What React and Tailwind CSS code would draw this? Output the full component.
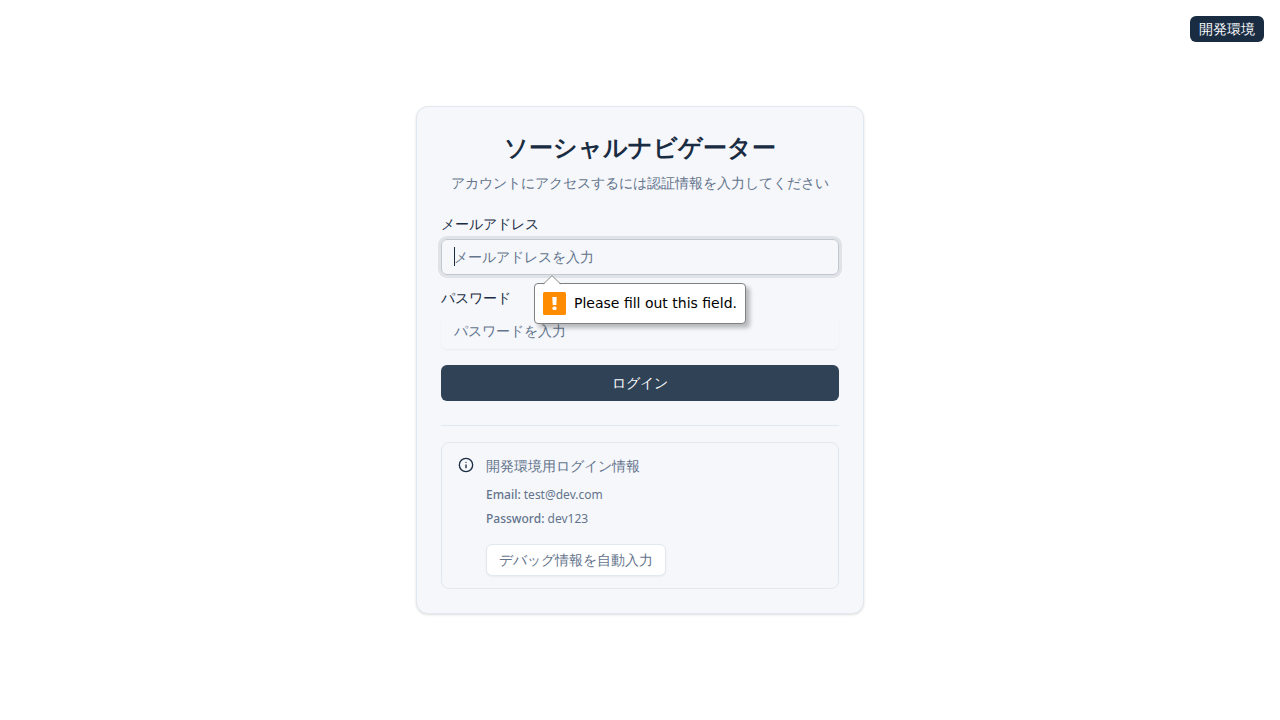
import { useState } from "react";
import { Info } from "lucide-react";

const inputBase =
  "h-9 w-full rounded-md border bg-transparent px-3 pt-1 pb-1.5 text-sm text-[#1a2c42] outline-none placeholder:text-[#64748b]";

function ValidationBubble({ children }) {
  return (
    <div
      role="alert"
      className="absolute top-full left-[93px] z-10 mt-2 flex h-[41px] items-start gap-2 rounded border border-[#808080] bg-white px-2 pt-2 font-['DejaVu_Sans',sans-serif] text-sm whitespace-nowrap text-black shadow-[4px_4px_4px_rgba(0,0,0,0.25)]"
    >
      <svg
        className="absolute -top-[9px] left-[8px]"
        width="18"
        height="10"
        viewBox="0 0 18 10"
        aria-hidden="true"
      >
        <path d="M0.5 9.5 L9 1 L17.5 9.5 V10 H0.5 Z" fill="#fff" />
        <path d="M0.5 8.9 L9 0.7 L17.5 8.9" fill="none" stroke="#808080" strokeWidth="0.9" />
      </svg>
      <svg width="23" height="23" viewBox="0 0 23 23" aria-hidden="true">
        <rect width="23" height="23" rx="1.5" fill="#ff8c00" />
        <path d="M9.3 5 H13.7 L13.3 13 H9.7 Z" fill="#fff" />
        <rect x="9.4" y="14.6" width="4.2" height="3.4" rx="1.6" fill="#fff" />
      </svg>
      <span className="leading-[22px]">{children}</span>
    </div>
  );
}

export default function App() {
  const [email, setEmail] = useState("");
  const [password, setPassword] = useState("");

  const fillDebug = () => {
    setEmail("test@dev.com");
    setPassword("dev123");
  };

  return (
    <main className="relative flex min-h-screen items-center justify-center bg-white font-['Noto_Sans',sans-serif] text-[#1a2c42]">
      <div className="absolute top-4 right-4 rounded-md bg-[#1a2c42] px-[9px] py-[3px] text-sm text-[#f8fafc]">
        開発環境
      </div>

      <section className="w-full max-w-md rounded-xl border border-[#e2e8f0] bg-[#f5f7fb] p-6 shadow-sm">
        <header className="flex flex-col gap-2.5 text-center">
          <h1 className="text-2xl font-bold">ソーシャルナビゲーター</h1>
          <p className="text-sm text-[#64748b]">
            アカウントにアクセスするには認証情報を入力してください
          </p>
        </header>

        <form
          noValidate
          onSubmit={(e) => e.preventDefault()}
          className="mt-6 flex flex-col gap-4"
        >
          <div className="flex flex-col gap-2">
            <label htmlFor="email" className="text-sm leading-[14px] font-medium">
              メールアドレス
            </label>
            <div className="relative">
              <input
                id="email"
                type="email"
                required
                value={email}
                onChange={(e) => setEmail(e.target.value)}
                placeholder="メールアドレスを入力"
                className={`${inputBase} border-[#c3c8cf] caret-transparent shadow-xs ring-3 ring-[#dfe2e7]`}
              />
              {!email && (
                <>
                  <span
                    aria-hidden="true"
                    className="absolute top-2 left-[13px] h-[19px] w-px bg-[#1a2c42]"
                  />
                  <ValidationBubble>Please fill out this field.</ValidationBubble>
                </>
              )}
            </div>
          </div>

          <div className="flex flex-col gap-2">
            <label htmlFor="password" className="text-sm leading-[14px] font-medium">
              パスワード
            </label>
            <input
              id="password"
              type="password"
              required
              value={password}
              onChange={(e) => setPassword(e.target.value)}
              placeholder="パスワードを入力"
              className={`${inputBase} border-[#f5f7fb] shadow-xs`}
            />
          </div>

          <button
            type="submit"
            className="h-9 w-full rounded-md bg-[#304256] text-sm font-medium text-[#f8fafc]"
          >
            ログイン
          </button>
        </form>

        <div className="mt-6 border-t border-[#e2e8f0] pt-4">
          <div className="flex items-start gap-3 rounded-lg border border-[#e2e8f0] px-4 py-3">
            <Info className="mt-[2px] size-4 shrink-0" aria-hidden="true" />
            <div className="flex flex-col items-start text-xs text-[#64748b]">
              <h2 className="text-sm leading-[22px]">開発環境用ログイン情報</h2>
              <div className="mt-[6px] leading-6">
                <p>
                  <strong className="font-medium">Email:</strong> test@dev.com
                </p>
                <p>
                  <strong className="font-medium">Password:</strong> dev123
                </p>
              </div>
              <button
                type="button"
                onClick={fillDebug}
                className="mt-[13px] h-8 rounded-md border border-[#e2e8f0] bg-white px-3 text-sm font-medium shadow-xs"
              >
                デバッグ情報を自動入力
              </button>
            </div>
          </div>
        </div>
      </section>
    </main>
  );
}
